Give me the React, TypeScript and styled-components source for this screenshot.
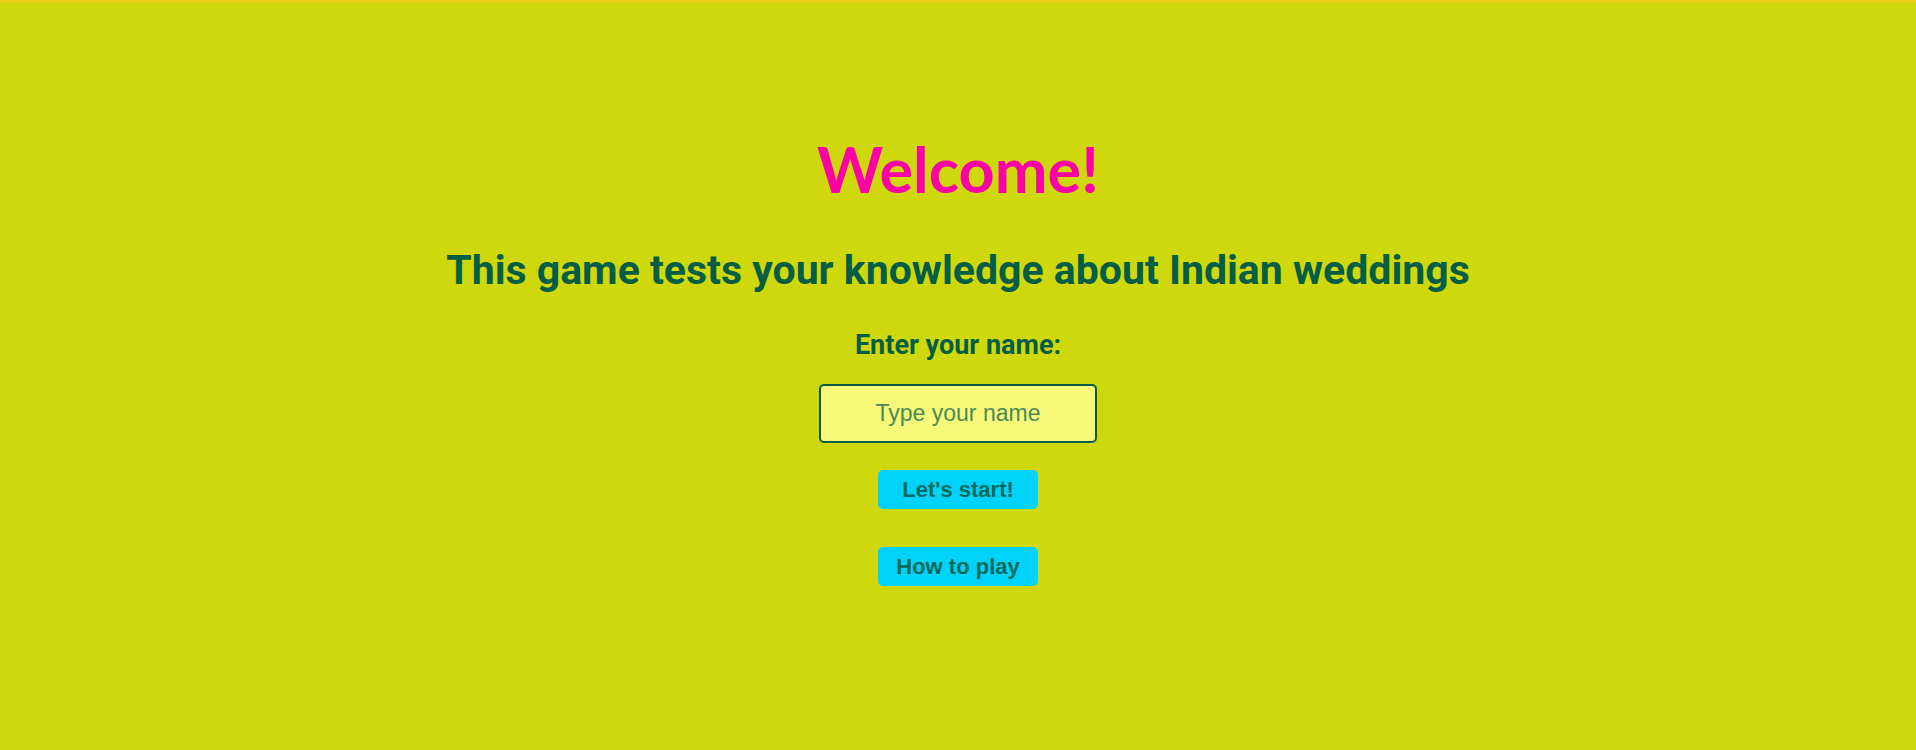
import React from "react";
import styled, { createGlobalStyle } from "styled-components";

const Global = createGlobalStyle`
  html, body { margin: 0; padding: 0; }
  body { background: #cfd80c; }
`;

const Page = styled.div`
  min-height: 750px;
  background: #cfd80c;
  border-top: 2px solid #ecd01c;
  box-sizing: border-box;
  display: flex;
  flex-direction: column;
  align-items: center;
  padding-top: 130px;
`;

const Title = styled.h1`
  margin: 0;
  font-family: "Lato", sans-serif;
  font-weight: 700;
  font-size: 63px;
  line-height: 74px;
  color: #fb02a4;
`;

const Subtitle = styled.h2`
  margin: 39px 0 0;
  font-family: "Roboto", sans-serif;
  font-weight: 700;
  font-size: 41px;
  line-height: 50px;
  color: #045e45;
`;

const Label = styled.label`
  margin-top: 34px;
  font-family: "Roboto", sans-serif;
  font-weight: 700;
  font-size: 27px;
  line-height: 32px;
  color: #045e45;
`;

const NameInput = styled.input`
  margin-top: 23px;
  width: 278px;
  height: 59px;
  box-sizing: border-box;
  border: 2px solid #045e45;
  border-radius: 5px;
  background: #f8f87a;
  text-align: center;
  font-family: "Liberation Sans", Arial, sans-serif;
  font-size: 23px;
  color: #045e45;
  outline: none;
  &::placeholder { color: #4c8a55; opacity: 1; }
`;

const Button = styled.button<{ $gap: number }>`
  margin-top: ${(p) => p.$gap}px;
  width: 160px;
  height: 39px;
  border: none;
  border-radius: 5px;
  background: #00d2fa;
  font-family: "Liberation Sans", Arial, sans-serif;
  font-weight: 700;
  font-size: 22px;
  color: #066a5c;
  cursor: pointer;
`;

export default function App() {
  return (
    <>
      <Global />
      <Page>
        <Title>Welcome!</Title>
        <Subtitle>This game tests your knowledge about Indian weddings</Subtitle>
        <Label htmlFor="name">Enter your name:</Label>
        <NameInput id="name" placeholder="Type your name" />
        <Button $gap={27}>Let's start!</Button>
        <Button $gap={38}>How to play</Button>
      </Page>
    </>
  );
}
